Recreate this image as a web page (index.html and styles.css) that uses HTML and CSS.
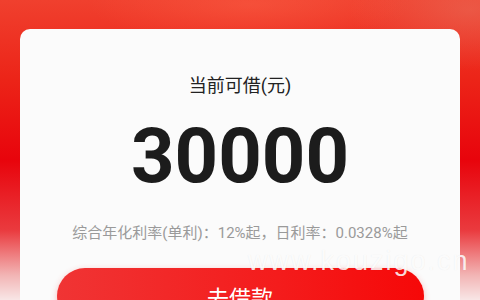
FILE: index.html
```html
<!DOCTYPE html>
<html>
<head>
  <title>去借款</title>
  <link rel="stylesheet" href="styles.css">
</head>
<body>
  <div class="page">
    <div class="card">
      <div class="label">当前可借(元)</div>
      <div class="amount">30000</div>
      <div class="rate">综合年化利率(单利)：12%起，日利率：0.0328%起</div>
      <button class="borrow">去借款</button>
    </div>
    <!-- watermark over the picture -->
    <div class="watermark">www.kouzigo.cn</div>
  </div>
</body>
</html>
```

FILE: styles.css
```css
/* loan amount card */
body {
  margin: 0;
  padding: 0;
  font-family: Roboto, "Noto Sans CJK SC", sans-serif;
}

.page {
  position: relative;
  width: 480px;
  height: 300px;
  overflow: hidden;
  padding-top: 29px;
  box-sizing: border-box;
  background:
    radial-gradient(ellipse 160px 40px at 250px 5px, rgba(255, 110, 80, 0.35), transparent),
    radial-gradient(ellipse 120px 60px at 470px 10px, rgba(230, 120, 100, 0.45), transparent),
    linear-gradient(to bottom, #f0402e 0, #ec2418 80px, #e8040c 160px, #ea3a3e 230px, #f2b4b4 275px, #f8e6e6 300px);
}

.card {
  margin: 0 20px;
  height: 300px;
  padding-top: 47px;
  box-sizing: border-box;
  background-color: #fbfbfb;
  border-radius: 10px;
  text-align: center;
}

.label {
  font-size: 18px;
  line-height: 20px;
  color: #222;
}

.amount {
  margin-top: 22px;
  font-size: 76px;
  font-weight: bold;
  line-height: 76px;
  color: #1c1c1c;
}

.rate {
  margin-top: 31px;
  font-size: 15px;
  line-height: 16px;
  color: #9a9a9a;
}

.borrow {
  display: block;
  width: 367px;
  height: 56px;
  margin: 27px auto 0;
  border: none;
  border-radius: 28px;
  background: linear-gradient(to right, #f03434, #f41c1c 60%, #f60808);
  box-shadow: 0 2px 6px rgba(240, 40, 40, 0.3);
  color: white;
  font-family: "Noto Sans CJK SC", sans-serif;
  font-size: 22px;
}

.watermark {
  position: absolute;
  left: 248px;
  top: 246px;
  font-family: "Liberation Sans", sans-serif;
  font-size: 27px;
  letter-spacing: 2px;
  color: rgba(255, 255, 255, 0.85);
  text-shadow: 0 0 1px rgba(0, 0, 0, 0.08);
}
```
